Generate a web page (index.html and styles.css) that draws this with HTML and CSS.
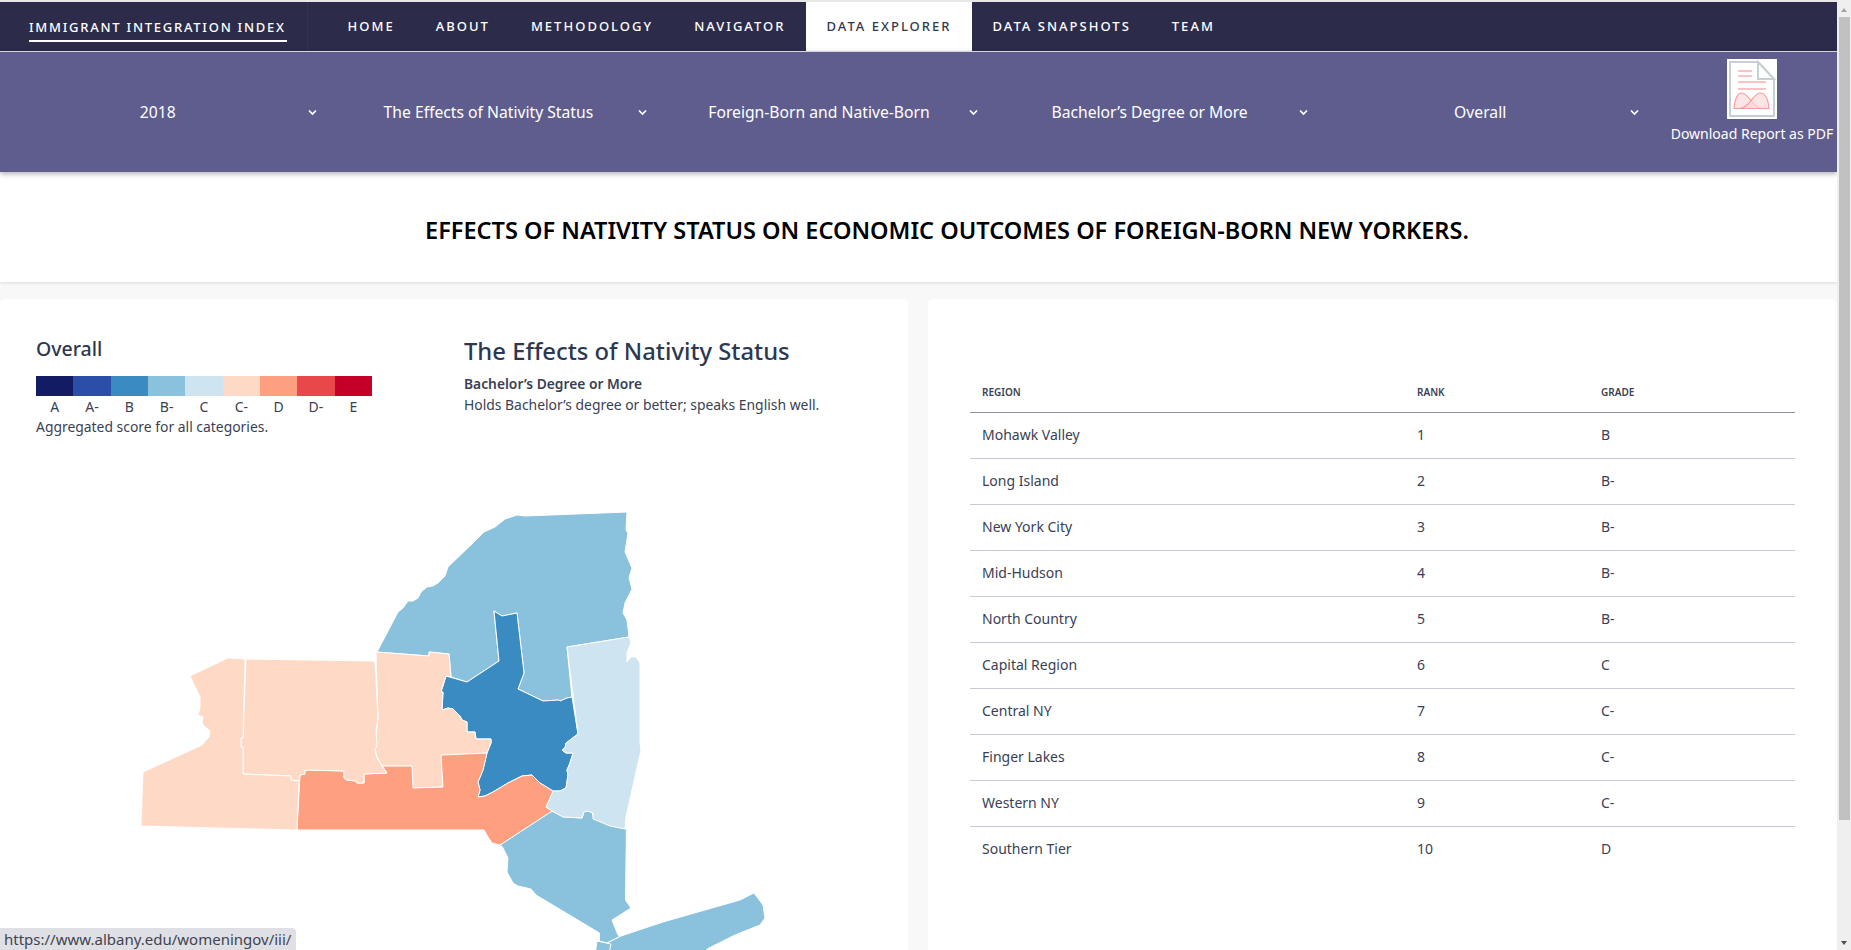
FILE: index.html
```html
<!DOCTYPE html>
<html lang="en">
<head>
<meta charset="utf-8">
<title>Immigrant Integration Index</title>
<link rel="stylesheet" href="styles.css">
</head>
<body>
<div class="frame">
  <div class="page">
    <nav class="topnav">
      <a class="brand"><span class="brand-text">IMMIGRANT INTEGRATION INDEX</span></a>
      <ul class="menu">
        <li class="menu-item">HOME</li>
        <li class="menu-item">ABOUT</li>
        <li class="menu-item">METHODOLOGY</li>
        <li class="menu-item">NAVIGATOR</li>
        <li class="menu-item active">DATA EXPLORER</li>
        <li class="menu-item">DATA SNAPSHOTS</li>
        <li class="menu-item">TEAM</li>
      </ul>
    </nav>
    <section class="filters">
      <div class="select"><span class="select-label">2018</span><svg class="chev" viewBox="0 0 9 7"><path d="M1 1.500 4.500 5 8 1.500"/></svg></div>
      <div class="select"><span class="select-label">The Effects of Nativity Status</span><svg class="chev" viewBox="0 0 9 7"><path d="M1 1.500 4.500 5 8 1.500"/></svg></div>
      <div class="select"><span class="select-label">Foreign-Born and Native-Born</span><svg class="chev" viewBox="0 0 9 7"><path d="M1 1.500 4.500 5 8 1.500"/></svg></div>
      <div class="select"><span class="select-label">Bachelor’s Degree or More</span><svg class="chev" viewBox="0 0 9 7"><path d="M1 1.500 4.500 5 8 1.500"/></svg></div>
      <div class="select"><span class="select-label">Overall</span><svg class="chev" viewBox="0 0 9 7"><path d="M1 1.500 4.500 5 8 1.500"/></svg></div>
      <a class="pdf">
        <svg class="pdf-icon" viewBox="0 0 50 60">
          <rect width="50" height="60" fill="#fff"/>
          <path d="M3 3H31L47 20V57H3Z" fill="#fff" stroke="#c6cfd2" stroke-width="2"/>
          <path d="M31 3V20H47Z" fill="#fff" stroke="#c6cfd2" stroke-width="2"/>
          <path d="M11 12H25M11 17H25M11 23H39M11 30H39" stroke="#fbaeae" stroke-width="1.6"/>
          <path class="bell" d="M7 49.500C8 39 11 34 15 34C22 34 25 49.500 36 49.500Z"/>
          <path class="bell" d="M42 49.500C41 39 38 34 33 34C26 34 23 49.500 12 49.500Z"/>
        </svg>
        <span class="pdf-text">Download Report as PDF</span>
      </a>
    </section>
    <header class="headline">
      <h1>EFFECTS OF NATIVITY STATUS ON ECONOMIC OUTCOMES OF FOREIGN-BORN NEW YORKERS.</h1>
    </header>
    <main class="content">
      <section class="card map-card">
        <div class="map-head">
          <div class="legend">
            <h3>Overall</h3>
            <div class="scale">
              <div class="step"><i class="swatch g-a"></i><span>A</span></div>
              <div class="step"><i class="swatch g-am"></i><span>A-</span></div>
              <div class="step"><i class="swatch g-b"></i><span>B</span></div>
              <div class="step"><i class="swatch g-bm"></i><span>B-</span></div>
              <div class="step"><i class="swatch g-c"></i><span>C</span></div>
              <div class="step"><i class="swatch g-cm"></i><span>C-</span></div>
              <div class="step"><i class="swatch g-d"></i><span>D</span></div>
              <div class="step"><i class="swatch g-dm"></i><span>D-</span></div>
              <div class="step"><i class="swatch g-e"></i><span>E</span></div>
            </div>
            <p>Aggregated score for all categories.</p>
          </div>
          <div class="about">
            <h2>The Effects of Nativity Status</h2>
            <strong>Bachelor’s Degree or More</strong>
            <p>Holds Bachelor’s degree or better; speaks English well.</p>
          </div>
        </div>
        <svg class="map" viewBox="0 480 908 480">
          <g class="regions">
            <path class="r-bm" d="M377 652 398 612 403 608 408 601 413 601 418 598 421 592 427 587 433 586 438 583 445 576 448 567 475 541 484 532 495 527 505 519 517 515 525 516 627 512 626 530 628 533 625 552 632 568 629 578 632 589 625 603 623 613 627 620 629 637 567 647 572 698 567 698 560 701 559 700 543 701 518 689 524 673 517 613 502 616 494 611 499 661 467 682 451 677 449 654 429 652 429 656Z"/>
            <path class="r-bm" d="M552 811 564 817 582 818 584 811 592 812 594 819 610 825 625.500 829 626.500 822 625.500 900 631 908 612 920 618 935 621 936 607 943 599.500 941 599.500 933 536 895 531 889 518 886 513 883 507 872 508 858 502.500 847 500 845Z"/>
            <path class="r-bm" d="M621 936 663 922 740 900 754 893 763 905 765 918 760 925 735 935 709 948 690 962H610L607 943Z"/>
            <path class="r-bm" d="M597 941 611 944 607 962H594Z"/>
            <path class="r-b" d="M494 611 502 616 517 613 524 673 518 689 543 701 559 700 560 701 567 698 572 697 578 734 566 743 565 748 562 750 566 753 573 753 570 763 567 770 568 775 566 788 560 791 553 791 540 783 532 775 522 776 508 783 493 792 485 796 478 797 480 790 478 782 483 770 487 753 491 743 491 739 476 739 475 732 467 732 467 722 462 720 460 716 453 709 448 708 442 710 443 692 441 692 446 676 467 682 499 661Z"/>
            <path class="r-c" d="M567 647 629 637 631 642 627 653 627 662 631 657 636 657 640 663V743L641 750 626 817 625 829 610 826 593 819 593 813 588 811 584 812 582 818 563 817 552 811 546 807 553 791 560 791 566 788 568 775 567 770 570 763 573 753 566 753 562 750 565 748 566 743 578 734Z"/>
            <path class="r-cm" d="M376 652 429 656 429 652 449 654 451 677 446 676 441 692 443 692 442 710 448 708 453 709 460 716 462 720 467 722 467 732 475 732 476 739 491 739 491 743 487 753 441 755 443 787 413 788 412 766 382 766 377 757 375 748 377 727 378 717Z"/>
            <path class="r-d" d="M300 775 305 774 305 770 344 771 344 778 347 780 356 781 357 783 364 783 364 774 387 773 382 766 412 766 413 788 443 787 441 755 487 753 483 770 478 782 480 790 478 797 485 796 493 792 508 783 522 776 532 775 540 783 553 791 546 807 552 811 500 845 492 843 488 837 484 830H297Z"/>
            <path class="r-cm" d="M246 659 373.500 661 375 663 378 718 376 730 377 745 375 750 377 758 382 766 387 773 364 774 364 783 357 783 356 781 347 780 344 778 344 771 305 770 305 774 300 775 299 781 291 780 291 776 243 774 243 747 241 747 241 738 243 738Z"/>
            <path class="r-cm" d="M190 676 228 658 245 659 243 738 241 738 241 747 243 747 243 774 291 776 291 780 299 781 297 830 141 826 143 772 202 745 209 737 210 731 203 725 202 722 203 717 198 715 200 708 200 697Z"/>
          </g>
        </svg>
      </section>
      <section class="card table-card">
        <table class="ranks">
          <thead>
            <tr><th class="c-region">REGION</th><th class="c-rank">RANK</th><th>GRADE</th></tr>
          </thead>
          <tbody>
            <tr><td>Mohawk Valley</td><td>1</td><td>B</td></tr>
            <tr><td>Long Island</td><td>2</td><td>B-</td></tr>
            <tr><td>New York City</td><td>3</td><td>B-</td></tr>
            <tr><td>Mid-Hudson</td><td>4</td><td>B-</td></tr>
            <tr><td>North Country</td><td>5</td><td>B-</td></tr>
            <tr><td>Capital Region</td><td>6</td><td>C</td></tr>
            <tr><td>Central NY</td><td>7</td><td>C-</td></tr>
            <tr><td>Finger Lakes</td><td>8</td><td>C-</td></tr>
            <tr><td>Western NY</td><td>9</td><td>C-</td></tr>
            <tr><td>Southern Tier</td><td>10</td><td>D</td></tr>
          </tbody>
        </table>
      </section>
    </main>
    <div class="status">https://www.albany.edu/womeningov/iii/</div>
  </div>
  <div class="scrollbar">
    <div class="arrow arrow-up"></div>
    <div class="thumb"></div>
    <div class="arrow arrow-down"></div>
  </div>
</div>
</body>
</html>
```
FILE: styles.css
```css
* { box-sizing: border-box; }
html, body { margin: 0; height: 100%; overflow: hidden; }
body { font-family: "Noto Sans", "Open Sans", sans-serif; color: #3a3f55; background: #f8f8f8; }
.frame { display: flex; height: 950px; }
.page { flex: 1; min-width: 0; height: 950px; overflow: hidden; position: relative; border-top: 2px solid #e8e8e8; background: #f8f8f8; }

.topnav { display: flex; height: 49px; background: #2c2c4a; }
.brand { width: 308px; padding: 0 0 0 29px; border-right: 1px solid #333354; display: block; }
.brand-text { display: inline-block; color: #fff; font-size: 13px; font-weight: 500; letter-spacing: 1.75px; height: 40px; line-height: 51px; border-bottom: 2px solid #fff; width: 258px; white-space: nowrap; }
.menu { display: flex; list-style: none; margin: 0; padding: 0 0 0 19px; }
.menu-item { padding: 0 20.500px; line-height: 49px; height: 49px; color: #fff; font-size: 13px; font-weight: 500; letter-spacing: 2.02px; white-space: nowrap; }
.menu-item.active { background: #fff; color: #33394f; }

.filters { display: grid; grid-template-columns: repeat(5, 330.6px) 1fr; height: 121px; border-top: 1px solid #d5d5e2; background: #5e5d8e; box-shadow: 0 2px 5px rgba(0,0,0,.3); position: relative; z-index: 1; }
.select { display: flex; align-items: center; padding: 0 14px 0 8px; color: #fff; font-size: 15.700px; }
.select-label { flex: 1; text-align: center; white-space: nowrap; }
.chev { width: 9px; height: 7px; flex: none; }
.chev path { fill: none; stroke: #fff; stroke-width: 1.7; }
.pdf { display: flex; flex-direction: column; align-items: center; padding: 7px 0 0 14px; color: #fff; }
.pdf-icon { width: 50px; height: 60px; display: block; }
.bell { fill: #fbdada; fill-opacity: .7; stroke: #f59e9e; stroke-width: 1.2; }
.pdf-text { font-size: 14px; line-height: 18px; margin-top: 6px; white-space: nowrap; }

.headline { height: 110px; background: #fff; display: flex; align-items: center; justify-content: center; box-shadow: 0 1px 3px rgba(0,0,0,.12); padding: 5px 0 0 57px; }
.headline h1 { margin: 0; color: #000; font-size: 23.500px; font-weight: 600; white-space: nowrap; }

.content { display: grid; grid-template-columns: 908px 909px; column-gap: 20px; margin-top: 17px; }
.card { background: #fff; border-radius: 5px; height: 700px; overflow: hidden; }

.map-head { display: flex; height: 181px; padding: 35px 0 0 36px; }
.legend { width: 428px; }
.legend h3 { margin: 0; font-size: 19.500px; font-weight: 500; line-height: 30px; color: #2d3750; }
.scale { display: flex; width: 336px; margin-top: 12px; }
.step { flex: 1; text-align: center; font-size: 14px; line-height: 21px; }
.swatch { display: block; height: 20px; }
.step span { display: block; }
.g-a { background: #131b63; } .g-am { background: #2b4ea8; } .g-b { background: #3a8bc2; }
.g-bm { background: #8ac2dd; } .g-c { background: #cfe4f1; } .g-cm { background: #fed9c6; }
.g-d { background: #fe9f80; } .g-dm { background: #e84849; } .g-e { background: #c30126; }
.legend p { margin: 0; font-size: 13.900px; line-height: 19px; }
.about h2 { margin: 0; font-size: 23.800px; font-weight: 500; line-height: 34px; color: #2d3750; }
.about strong { display: block; margin-top: 6px; font-size: 13.800px; font-weight: 600; line-height: 20px; }
.about p { margin: 1px 0 0; font-size: 13.900px; line-height: 20px; }

.map { display: block; width: 908px; height: 480px; }
.regions path { stroke: #fff; stroke-width: 1; stroke-linejoin: round; }
.r-bm { fill: #8ac2dd; } .r-b { fill: #3a8bc2; } .r-c { fill: #cfe4f1; } .r-cm { fill: #fed9c6; } .r-d { fill: #fe9f80; }

.table-card { padding: 78px 43px 0 42px; }
.ranks { width: 825px; border-collapse: collapse; table-layout: fixed; }
.ranks th { text-align: left; font-size: 10px; font-weight: 600; height: 35px; padding: 0 12px 4px; border-bottom: 1px solid #8f8f9f; }
.ranks .c-region { width: 435px; }
.ranks .c-rank { width: 184px; }
.ranks td { font-size: 14px; height: 46px; padding: 0 12px 2px; border-bottom: 1px solid #c9c9dc; }
.ranks tr:last-child td { border-bottom: 0; }

.status { position: absolute; left: 0; bottom: 0; width: 296px; height: 22px; padding-left: 4px; background: #dfe0e5; border-top-right-radius: 4px; font-size: 15px; line-height: 22px; color: #3f4450; white-space: nowrap; }

.scrollbar { width: 14px; flex: none; background: #efefef; display: flex; flex-direction: column; padding: 0 1px 0 2px; }
.arrow { height: 17px; flex: none; position: relative; }
.arrow::after { content: ""; position: absolute; left: 2px; border-left: 3.500px solid transparent; border-right: 3.500px solid transparent; }
.arrow-up::after { top: 8px; border-bottom: 4px solid #a3a3a3; }
.arrow-down::after { top: 8px; border-top: 4px solid #505050; }
.thumb { height: 803px; background: #c1c1c1; }
.arrow-down { margin-top: auto; }
```
